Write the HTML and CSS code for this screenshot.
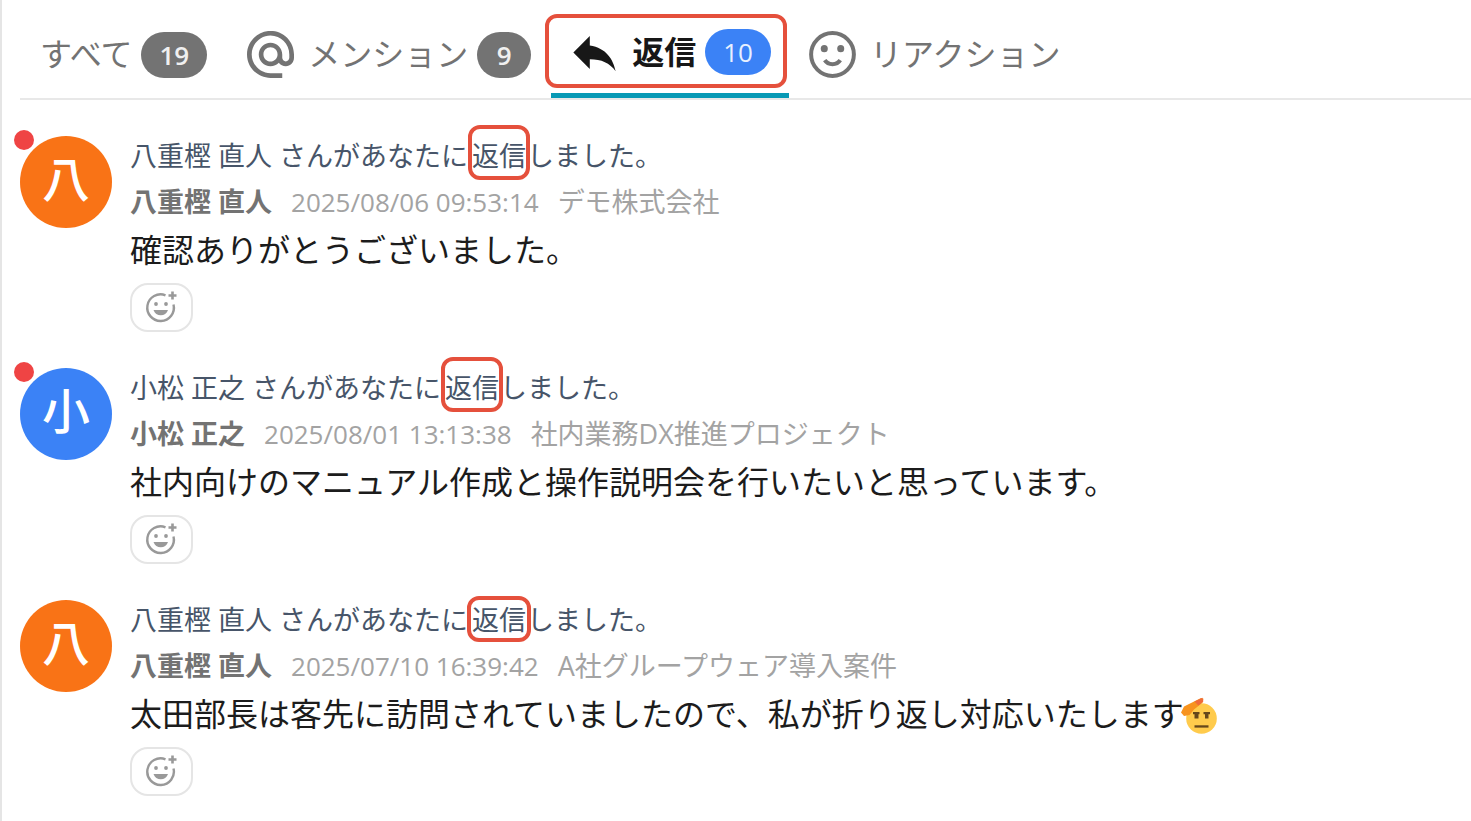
FILE: index.html
```
<!DOCTYPE html>
<html lang="ja">
<head>
<meta charset="utf-8">
<title>通知</title>
<meta name="viewport" content="width=device-width, initial-scale=1">
<link rel="stylesheet" href="styles.css">
</head>
<body>
<svg class="sprite" aria-hidden="true">
  <symbol id="add-reaction" viewBox="0 0 36 36">
    <path d="M21.500 5.300A13.300 13.300 0 1 0 29.500 14.500" fill="none" stroke="currentColor" stroke-width="2.400"/>
    <path d="M28.500 1.500v8M24.500 5.500h8" fill="none" stroke="currentColor" stroke-width="2.600"/>
    <circle cx="12" cy="14" r="1.900" fill="currentColor"/>
    <circle cx="22" cy="14" r="1.900" fill="currentColor"/>
    <path d="M9.500 20h14.500c-1 3.500-4 5.300-7.200 5.300S10.500 23.500 9.500 20z" fill="currentColor"/>
  </symbol>
</svg>
<main class="panel">
  <div class="tabs" role="tablist">
    <button class="tab" type="button" role="tab" aria-selected="false"><span class="label">すべて</span><span class="badge">19</span></button>
    <button class="tab" type="button" role="tab" aria-selected="false">
      <svg class="tab-icon" viewBox="2 2 20 20" aria-hidden="true"><path fill="currentColor" d="M12 1.950c-5.520 0-10 4.480-10 10s4.480 10 10 10h5v-2h-5c-4.340 0-8-3.660-8-8s3.660-8 8-8 8 3.660 8 8v1.430c0 .79-.71 1.570-1.500 1.570s-1.500-.78-1.500-1.570v-1.430c0-2.760-2.240-5-5-5s-5 2.240-5 5 2.240 5 5 5c1.380 0 2.640-.56 3.540-1.470.65.89 1.770 1.470 2.960 1.470 1.970 0 3.500-1.600 3.500-3.570v-1.430c0-5.520-4.480-10-10-10zm0 13c-1.660 0-3-1.340-3-3s1.340-3 3-3 3 1.340 3 3-1.340 3-3 3z"/></svg>
      <span class="label">メンション</span><span class="badge">9</span>
    </button>
    <button class="tab active" type="button" role="tab" aria-selected="true">
      <svg class="tab-icon" viewBox="2 2 20 20" aria-hidden="true"><path fill="currentColor" d="M10 9V5l-7 7 7 7v-4.100c5 0 8.500 1.600 11 5.100-1-5-4-10-11-11z"/></svg>
      <span class="label">返信</span><span class="badge">10</span>
    </button>
    <button class="tab" type="button" role="tab" aria-selected="false">
      <svg class="tab-icon" viewBox="2 2 20 20" aria-hidden="true"><circle cx="12" cy="12" r="9.100" fill="none" stroke="currentColor" stroke-width="1.700"/><circle cx="8.500" cy="9.500" r="1.500" fill="currentColor"/><circle cx="15.500" cy="9.500" r="1.500" fill="currentColor"/><path d="M8.700 14.400c.7 1.100 1.900 1.700 3.300 1.700s2.600-.6 3.300-1.700" fill="none" stroke="currentColor" stroke-width="1.700"/></svg>
      <span class="label">リアクション</span>
    </button>
  </div>

  <ul class="feed">
    <li class="item">
      <div class="avatar orange unread">八</div>
      <div class="body">
        <p class="notice">八重樫 直人 さんがあなたに<mark class="mark">返信</mark>しました。</p>
        <p class="meta"><strong class="name">八重樫 直人</strong><time>2025/08/06 09:53:14</time><span>デモ株式会社</span></p>
        <p class="message">確認ありがとうございました。</p>
        <button class="react" type="button" aria-label="リアクションを追加"><svg class="react-icon" aria-hidden="true"><use href="#add-reaction"/></svg></button>
      </div>
    </li>
    <li class="item">
      <div class="avatar blue unread">小</div>
      <div class="body">
        <p class="notice">小松 正之 さんがあなたに<mark class="mark">返信</mark>しました。</p>
        <p class="meta"><strong class="name">小松 正之</strong><time>2025/08/01 13:13:38</time><span>社内業務DX推進プロジェクト</span></p>
        <p class="message">社内向けのマニュアル作成と操作説明会を行いたいと思っています。</p>
        <button class="react" type="button" aria-label="リアクションを追加"><svg class="react-icon" aria-hidden="true"><use href="#add-reaction"/></svg></button>
      </div>
    </li>
    <li class="item">
      <div class="avatar orange">八</div>
      <div class="body">
        <p class="notice">八重樫 直人 さんがあなたに<mark class="mark short">返信</mark>しました。</p>
        <p class="meta"><strong class="name">八重樫 直人</strong><time>2025/07/10 16:39:42</time><span>A社グループウェア導入案件</span></p>
        <p class="message">太田部長は客先に訪問されていましたので、私が折り返し対応いたします<svg class="emoji" viewBox="0 0 38 38" role="img" aria-label="敬礼"><circle cx="21.500" cy="21.500" r="15.300" fill="#ffcb4c"/><path d="M1 15.500L4 9.500l11-5.500L21 1l2.500.8-.8 3.700L14 12.500 9.500 18 4 19z" fill="#f7931e"/><path d="M14.500 4.500L22.500.8l.8 3.600-5 4.100" fill="#ef6a3a"/><path d="M13 15h6.500v2.300H13zM23.500 15h6.500v2.300h-6.500z" fill="#65471b"/><path d="M14.500 16h4v5.500h-4zM25 16h3.500v5.500H25z" fill="#65471b"/><path d="M14.500 28.300h14v2.300h-14z" fill="#65471b"/></svg></p>
        <button class="react" type="button" aria-label="リアクションを追加"><svg class="react-icon" aria-hidden="true"><use href="#add-reaction"/></svg></button>
      </div>
    </li>
  </ul>
</main>
</body>
</html>
```

FILE: styles.css
```
* { box-sizing: border-box; }

body {
  margin: 0;
  background: #fff;
  color: #1c1c1c;
  font-family: "Open Sans", "Noto Sans CJK JP", sans-serif;
}

.sprite { position: absolute; width: 0; height: 0; }

button { font: inherit; cursor: pointer; }
p { margin: 0; }

.panel {
  min-height: 100vh;
  padding: 11px 0 0 18px;
  border-left: 2px solid #e5e5e5;
}

/* Tabs */
.tabs {
  display: flex;
  border-bottom: 2px solid #e8e8e8;
}

.tab {
  position: relative;
  display: flex;
  align-items: center;
  height: 87px;
  padding: 0 20px;
  border: 0;
  background: none;
  color: #737373;
  font-size: 32px;
  white-space: nowrap;
}

.label { padding-bottom: 5px; }

.tab-icon {
  flex: none;
  width: 47px;
  height: 47px;
  margin-right: 14px;
}

.badge {
  min-width: 54px;
  margin-left: 9px;
  padding: 0 18px;
  border-radius: 23px;
  background: #737373;
  color: #f0f0f0;
  font-size: 26px;
  font-weight: 600;
  line-height: 46px;
  text-align: center;
}

.tab.active {
  padding-right: 18px;
  border-bottom: 5px solid #0899b5;
  color: #171717;
  font-weight: 700;
}

.tab.active .badge {
  background: #3b82f6;
  color: #e8f0ff;
  font-weight: 500;
}

.tab.active::after {
  content: "";
  position: absolute;
  inset: 3px 2px 5px -6px;
  border: 4px solid #e5503c;
  border-radius: 12px;
}

/* Feed */
.feed {
  display: grid;
  gap: 33px;
  margin: 0;
  padding: 33px 0 24px;
  list-style: none;
}

.item {
  display: flex;
  align-items: flex-start;
  gap: 18px;
}

.avatar {
  position: relative;
  flex: none;
  width: 92px;
  height: 92px;
  margin-top: 3px;
  border-radius: 50%;
  color: #fff;
  font-size: 48px;
  font-weight: 500;
  line-height: 86px;
  text-align: center;
}

.orange { background: #f97316; }
.blue { background: #3b82f6; }

.unread::before {
  content: "";
  position: absolute;
  top: -6px;
  left: -6px;
  width: 20px;
  height: 20px;
  border-radius: 50%;
  background: #ef4444;
}

.notice {
  color: #475569;
  font-size: 27px;
  line-height: 46px;
}

.mark {
  position: relative;
  margin: 0 1px 0 4px;
  background: none;
  color: inherit;
}

.mark::after {
  content: "";
  position: absolute;
  inset: -12px -4px -6px;
  border: 4px solid #e5503c;
  border-radius: 12px;
}

.mark.short::after { inset: -5px -5px -4px; }

.meta {
  display: flex;
  gap: 19px;
  color: #a3a3a3;
  font-size: 27px;
  line-height: 46px;
}

.meta time { font-size: 26px; }
.name { color: #737373; font-weight: 700; }

.message {
  font-size: 32px;
  line-height: 50px;
}

.emoji {
  width: 38px;
  height: 38px;
  margin-left: -4px;
  vertical-align: -9px;
}

.react {
  display: grid;
  place-items: center;
  width: 63px;
  height: 49px;
  margin-top: 8px;
  padding: 0;
  border: 2px solid #e5e5e5;
  border-radius: 18px;
  background: #fff;
  color: #999;
}

.react-icon { width: 36px; height: 36px; }
```
